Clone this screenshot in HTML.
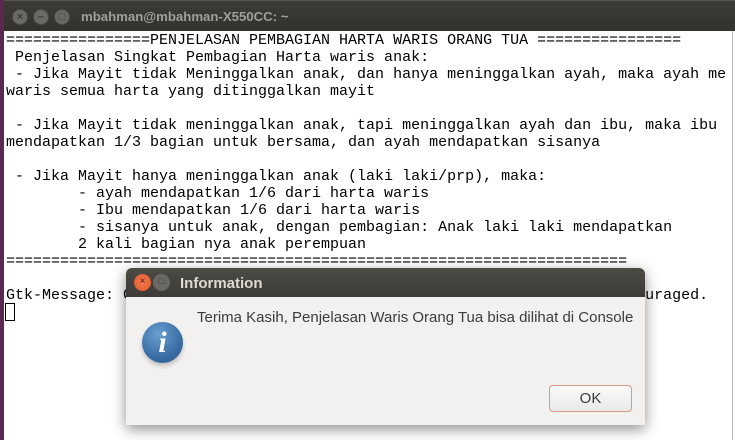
<!DOCTYPE html>
<html><head><meta charset="utf-8"><style>
*{margin:0;padding:0;box-sizing:border-box}
body{width:735px;height:440px;overflow:hidden;background:#fff;position:relative;font-family:"Liberation Sans",sans-serif}
#purple{position:absolute;left:0;top:0;width:4px;height:440px;background:#5e2750}
#title{position:absolute;left:4px;top:0;width:731px;height:31px;background:linear-gradient(#3c3b37,#33322e);border-top:1px solid #555}
#title .t{position:absolute;left:77px;top:8px;color:#a09f9a;font-size:13.2px;font-weight:bold}
.wb{position:absolute;top:8px;width:16px;height:16px;border-radius:50%;background:#6a6966;border:1px solid #4a4945;color:#3c3b37;font-size:11px;text-align:center;line-height:14px;font-weight:bold}
#term{position:absolute;left:6px;top:32px;font-family:"Liberation Mono",monospace;font-size:15px;line-height:17px;white-space:pre;color:#000}
#rline{position:absolute;left:732px;top:31px;width:1px;height:409px;background:#bbb}
#cur{position:absolute;left:5px;top:303px;width:10px;height:18px;border:1px solid #000}
#dlg{position:absolute;left:126px;top:268px;width:519px;height:157px;background:#f2f1f0;border-radius:6px 6px 0 0;box-shadow:0 4px 14px rgba(0,0,0,.45);overflow:hidden}
#dt{height:29px;background:linear-gradient(#4c4a44,#3c3b37);position:relative}
#dt .t{position:absolute;left:54px;top:7px;color:#dfdbd2;font-size:15px;font-weight:bold}
.db{position:absolute;top:6px;width:17px;height:17px;border-radius:50%;font-size:10px;text-align:center;line-height:16px;color:#3c3b37}
#msg{position:absolute;left:71px;top:41px;color:#3c3c3c;font-size:15px}
#icon{position:absolute;left:16px;top:54px;width:41px;height:41px;border-radius:50%;background:radial-gradient(circle at 40% 30%,#6a9fd0,#3a6ea5 60%,#2c5a8c);box-shadow:0 3px 4px rgba(0,0,0,.2);color:#fff;font-family:"Liberation Serif",serif;font-style:italic;font-weight:bold;font-size:30px;text-align:center;line-height:41px}
#ok{position:absolute;left:423px;top:117px;width:83px;height:27px;border:1px solid #d49a87;border-radius:4px;background:linear-gradient(#fafafa,#ebe9e6);text-align:center;line-height:25px;font-size:15px;color:#3c3c3c}
</style></head><body>
<div id="purple"></div>
<div id="title">
<div class="wb" style="left:8px">×</div><div class="wb" style="left:29px">–</div><div class="wb" style="left:50px">□</div>
<div class="t">mbahman@mbahman-X550CC: ~</div></div>
<div id="term">================PENJELASAN PEMBAGIAN HARTA WARIS ORANG TUA ================
 Penjelasan Singkat Pembagian Harta waris anak:
 - Jika Mayit tidak Meninggalkan anak, dan hanya meninggalkan ayah, maka ayah me
waris semua harta yang ditinggalkan mayit

 - Jika Mayit tidak meninggalkan anak, tapi meninggalkan ayah dan ibu, maka ibu
mendapatkan 1/3 bagian untuk bersama, dan ayah mendapatkan sisanya

 - Jika Mayit hanya meninggalkan anak (laki laki/prp), maka:
        - ayah mendapatkan 1/6 dari harta waris
        - Ibu mendapatkan 1/6 dari harta waris
        - sisanya untuk anak, dengan pembagian: Anak laki laki mendapatkan
        2 kali bagian nya anak perempuan
=====================================================================

Gtk-Message: GtkDialog mapped without a transient parent. This is discouraged.</div>
<div id="rline"></div>
<div id="cur"></div>
<div id="dlg">
<div id="dt"><div class="db" style="left:8px;background:radial-gradient(#f47a50,#e0552a);color:#4a1a0a">×</div><div class="db" style="left:27px;background:#6a6966">□</div><div class="t">Information</div></div>
<div id="icon">i</div>
<div id="msg">Terima Kasih, Penjelasan Waris Orang Tua bisa dilihat di Console</div>
<div id="ok">OK</div>
</div>
</body></html>
